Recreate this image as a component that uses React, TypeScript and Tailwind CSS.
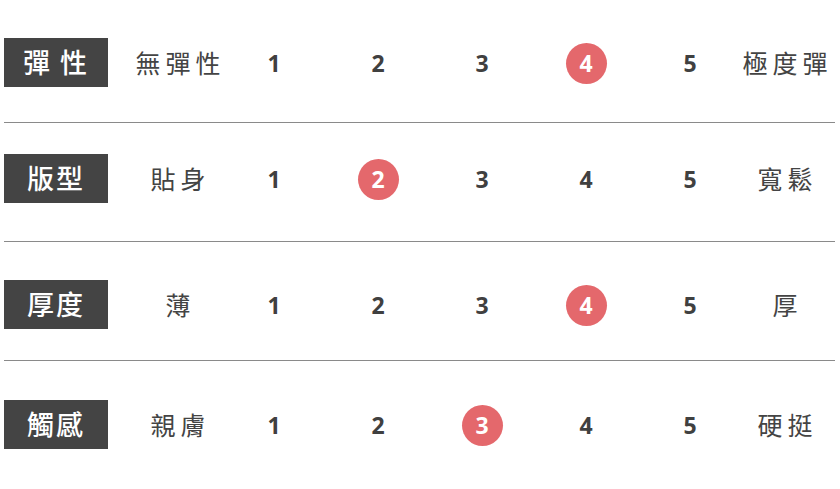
const rows = [
  { label: "彈 性", left: "無彈性", right: "極度彈", pick: 4, pad: "pt-[38px] pb-[35px]" },
  { label: "版型", left: "貼身", right: "寬鬆", pick: 2, pad: "pt-[31px] pb-[38px]" },
  { label: "厚度", left: "薄", right: "厚", pick: 4, pad: "pt-[38px] pb-[31px]" },
  { label: "觸感", left: "親膚", right: "硬挺", pick: 3, pad: "pt-[39px] pb-[40px]" },
];

export default function App() {
  return (
    <div className="w-[840px] h-[489px] bg-white overflow-hidden pl-[4px] pr-[5px] font-['Noto_Sans_CJK_TC','Noto_Sans',sans-serif]">
      {rows.map((row, i) => (
        <div
          key={row.label}
          className={`flex items-center ${row.pad} ${i < rows.length - 1 ? "border-b border-[#8a8a8a]" : ""}`}
        >
          <div className="w-[104px] h-[49px] shrink-0 bg-[#444444] text-white text-[27px] font-medium flex items-center justify-center tracking-[2px]">
            {row.label}
          </div>
          <div className="w-[140px] shrink-0 text-center text-[25px] text-[#444] tracking-[5px] pl-[5px]">
            {row.left}
          </div>
          <div className="flex gap-[52px] shrink-0 font-['Open_Sans','Liberation_Sans',sans-serif]">
            {[1, 2, 3, 4, 5].map((n) => (
              <div key={n} className="w-[52px] flex justify-center">
                {n === row.pick ? (
                  <span className="w-[41px] h-[41px] mt-[2px] rounded-full bg-[#e4686c] text-white text-[23px] font-bold flex items-center justify-center">
                    {n}
                  </span>
                ) : (
                  <span className="h-[41px] mt-[2px] text-[23px] font-bold text-[#404040] flex items-center">
                    {n}
                  </span>
                )}
              </div>
            ))}
          </div>
          <div className="w-[138px] shrink-0 text-center text-[25px] text-[#444] tracking-[5px] pl-[5px]">
            {row.right}
          </div>
        </div>
      ))}
    </div>
  );
}
